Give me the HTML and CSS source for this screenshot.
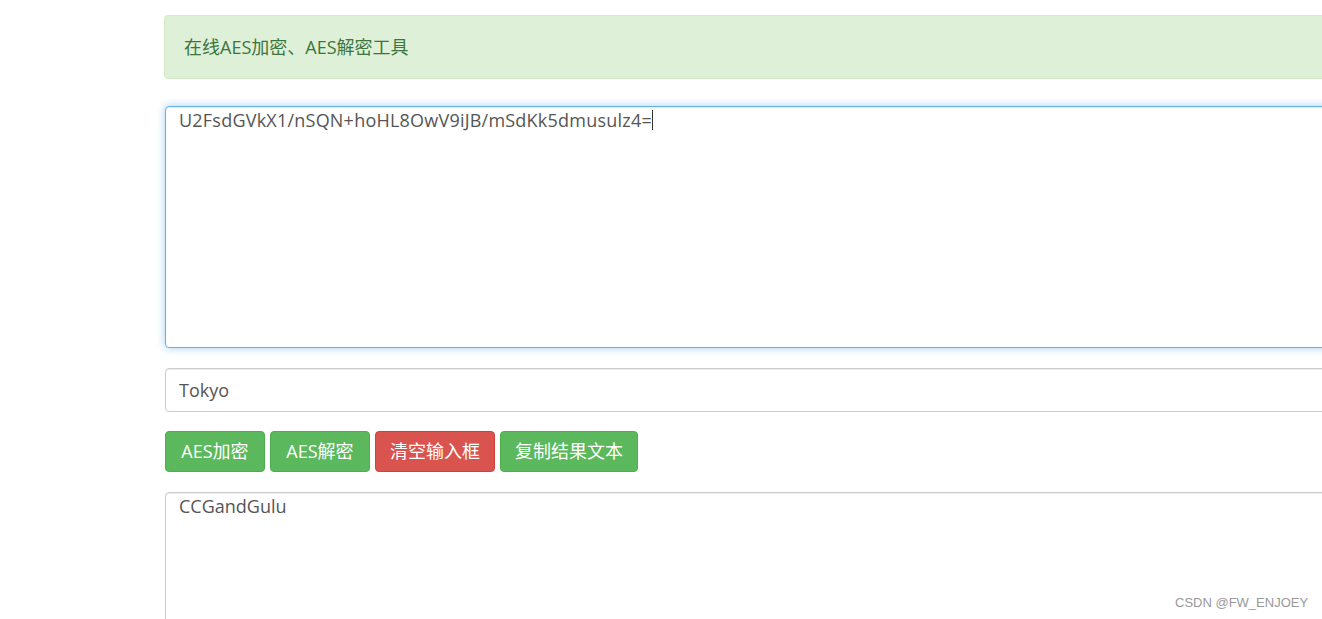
FILE: index.html
```html
<!DOCTYPE html>
<html lang="zh-CN">
<head>
<meta charset="utf-8">
<title>在线AES加密、AES解密工具</title>
<link rel="stylesheet" href="styles.css">
</head>
<body>
<main class="page">
  <div class="alert">在线AES加密、AES解密工具</div>
  <div class="control area focused" role="textbox">U2FsdGVkX1/nSQN+hoHL8OwV9iJB/mSdKk5dmusulz4=<span class="caret"></span></div>
  <div class="control input" role="textbox">Tokyo</div>
  <div class="buttons">
    <button class="btn success">AES加密</button>
    <button class="btn success">AES解密</button>
    <button class="btn danger">清空输入框</button>
    <button class="btn success">复制结果文本</button>
  </div>
  <div class="control area result" role="textbox">CCGandGulu</div>
</main>
<div class="watermark">CSDN @FW_ENJOEY</div>
</body>
</html>
```
FILE: styles.css
```css
html, body {
  margin: 0;
  padding: 0;
  height: 619px;
  overflow: hidden;
  background: #fff;
}
body {
  font-family: "Open Sans", "Noto Sans CJK SC", sans-serif;
  font-size: 18px;
  color: #555;
  position: relative;
}
.page {
  width: 1300px;
  padding: 15px 0 0 164px;
  display: flex;
  flex-direction: column;
}
.alert {
  background: #dff0d8;
  border: 1px solid #d6e9c6;
  border-radius: 4px;
  color: #3c763d;
  padding: 18px 19px;
  line-height: 26px;
  height: 26px;
  margin-bottom: 27px;
}
.control {
  background: #fff;
  border: 1px solid #ccc;
  border-radius: 4px;
  box-shadow: inset 0 1px 1px rgba(0,0,0,.075);
  padding: 0 13px;
  line-height: 26px;
  color: #555;
  margin-left: 1px;
}
.focused {
  border-color: #66afe9;
  box-shadow: inset 0 1px 1px rgba(0,0,0,.075), 0 0 8px rgba(102,175,233,.6);
  height: 240px;
  margin-bottom: 20px;
  letter-spacing: 0.22px;
}
.caret {
  display: inline-block;
  width: 1px;
  height: 20px;
  background: #333;
  vertical-align: -3px;
}
.input {
  height: 42px;
  line-height: 42px;
  margin-bottom: 19px;
}
.buttons {
  display: flex;
  gap: 5px;
  margin-bottom: 20px;
  margin-left: 1px;
}
.btn {
  font: inherit;
  font-size: 18px;
  height: 41px;
  min-width: 100px;
  padding: 0 14px;
  border-radius: 4px;
  border: 1px solid;
  color: #fff;
  line-height: 39px;
}
.success {
  background: #5cb85c;
  border-color: #4cae4c;
}
.danger {
  background: #d9534f;
  border-color: #d43f3a;
}
.result {
  height: 200px;
}
.watermark {
  position: absolute;
  left: 1175px;
  top: 595px;
  font-family: "Liberation Sans", Arial, sans-serif;
  font-size: 13px;
  color: #999;
}
```
